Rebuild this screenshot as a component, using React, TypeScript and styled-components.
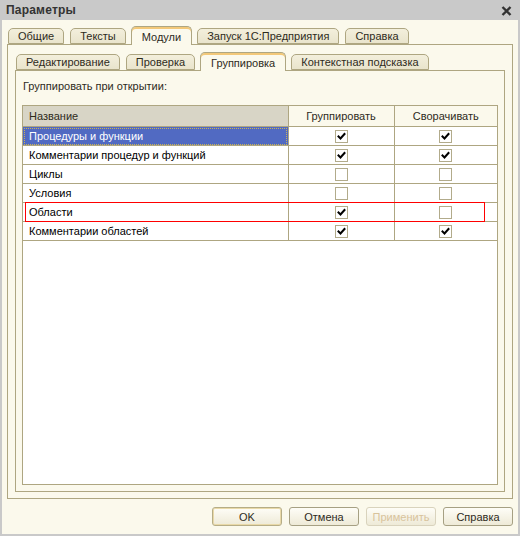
import React from 'react';
import styled, { createGlobalStyle } from 'styled-components';

const GlobalStyle = createGlobalStyle`
  html, body {
    margin: 0;
    padding: 0;
    background: #c9c9c9;
  }
  body {
    font-family: "Liberation Sans", Arial, sans-serif;
    font-size: 11px;
    color: #2b2a1f;
  }
`;

const ink = '#2e2b1c';
const line = '#aea681';

const outerTabs = [
  { title: 'Общие' },
  { title: 'Тексты' },
  { title: 'Модули', active: true },
  { title: 'Запуск 1С:Предприятия' },
  { title: 'Справка' },
];

const innerTabs = [
  { title: 'Редактирование' },
  { title: 'Проверка' },
  { title: 'Группировка', active: true },
  { title: 'Контекстная подсказка' },
];

const rows = [
  { name: 'Процедуры и функции', group: true, collapse: true, selected: true },
  { name: 'Комментарии процедур и функций', group: true, collapse: true },
  { name: 'Циклы', group: false, collapse: false },
  { name: 'Условия', group: false, collapse: false },
  { name: 'Области', group: true, collapse: false },
  { name: 'Комментарии областей', group: true, collapse: true },
];

const CheckBox = ({ checked }: { checked: boolean }) => (
  <Box>
    {checked && (
      <svg width="11" height="11" viewBox="0 0 11 11">
        <path d="M2.5 5.5 L4.5 7.5 L8.5 3" stroke="#000" strokeWidth="2" fill="none" strokeLinecap="square" />
      </svg>
    )}
  </Box>
);

const App = () => {
  return (
    <>
      <GlobalStyle />
      <Frame>
        <TitleBar>
          <Title>Параметры</Title>
          <CloseButton>
            <svg width="11" height="10" viewBox="0 0 11 10">
              <path d="M1.5 1 L9.5 9 M9.5 1 L1.5 9" stroke="#333" strokeWidth="2.4" />
            </svg>
          </CloseButton>
        </TitleBar>
        <Window>
          <Body>
            <TabStrip>
              {outerTabs.map((t) => (
                <Tab key={t.title} $active={!!t.active}>
                  {t.title}
                </Tab>
              ))}
            </TabStrip>
            <OuterPanel>
              <TabStrip>
                {innerTabs.map((t) => (
                  <Tab key={t.title} $active={!!t.active}>
                    {t.title}
                  </Tab>
                ))}
              </TabStrip>
              <InnerPanel>
                <Caption>Группировать при открытии:</Caption>
                <TableBox>
                  <Grid>
                    <colgroup>
                      <col style={{ width: 265 }} />
                      <col style={{ width: 106 }} />
                      <col />
                    </colgroup>
                    <thead>
                      <tr>
                        <HeadCell $current>Название</HeadCell>
                        <HeadCell>Группировать</HeadCell>
                        <HeadCell>Сворачивать</HeadCell>
                      </tr>
                    </thead>
                    <tbody>
                      {rows.map((r) => (
                        <tr key={r.name}>
                          <NameCell $selected={!!r.selected}>{r.name}</NameCell>
                          <CheckCell>
                            <CheckBox checked={r.group} />
                          </CheckCell>
                          <CheckCell>
                            <CheckBox checked={r.collapse} />
                          </CheckCell>
                        </tr>
                      ))}
                    </tbody>
                  </Grid>
                  <Highlight />
                </TableBox>
              </InnerPanel>
            </OuterPanel>
          </Body>
          <Footer>
            <Button $default>OK</Button>
            <Button>Отмена</Button>
            <Button disabled>Применить</Button>
            <Button>Справка</Button>
          </Footer>
        </Window>
      </Frame>
    </>
  );
};

const Frame = styled.div`
  width: 520px;
  height: 536px;
  box-sizing: border-box;
  padding: 0 2px 2px 2px;
  background: #c9c9c9;
  display: flex;
  flex-direction: column;
`;

const TitleBar = styled.div`
  height: 20px;
  flex-shrink: 0;
  display: flex;
  align-items: center;
  justify-content: space-between;
  padding: 0 4px;
`;

const Title = styled.div`
  font-weight: bold;
  font-size: 12px;
  color: #333;
  letter-spacing: 0.2px;
`;

const CloseButton = styled.div`
  display: flex;
  margin-right: 2px;
  margin-top: 1px;
`;

const Window = styled.div`
  flex: 1;
  background: #fbf9ec;
  display: flex;
  flex-direction: column;
`;

const Body = styled.div`
  padding: 6px 5px 0 5px;
  display: flex;
  flex-direction: column;
`;

const TabStrip = styled.div`
  display: flex;
  align-items: flex-end;
  gap: 6px;
  padding-left: 1px;
  height: 18px;
  position: relative;
  z-index: 1;
`;

const Tab = styled.div<{ $active: boolean }>`
  box-sizing: border-box;
  height: ${(p) => (p.$active ? '19px' : '16px')};
  margin: ${(p) => (p.$active ? '0 -1px -1px -1px' : '0')};
  padding: 0 ${(p) => (p.$active ? '10px' : '9px')};
  border: 1px solid ${line};
  border-bottom: ${(p) => (p.$active ? 'none' : `1px solid ${line}`)};
  border-radius: 5px 5px 0 0;
  background: ${(p) => (p.$active ? '#fbf9ec' : 'linear-gradient(#f3efdc, #e9e4cc)')};
  box-shadow: ${(p) => (p.$active ? 'inset 0 2px 0 #f3c878' : 'none')};
  display: flex;
  align-items: center;
  justify-content: center;
  font-size: 11px;
  color: ${ink};
  white-space: nowrap;
  padding-top: ${(p) => (p.$active ? '1px' : '0')};
`;

const OuterPanel = styled.div`
  height: 455px;
  box-sizing: border-box;
  border: 1px solid ${line};
  padding: 7px 7px 6px 7px;
  display: flex;
  flex-direction: column;
`;

const InnerPanel = styled.div`
  flex: 1;
  box-sizing: border-box;
  border: 1px solid ${line};
  padding: 9px 6px 6px 6px;
  display: flex;
  flex-direction: column;
`;

const Caption = styled.div`
  font-size: 11px;
  color: ${ink};
  height: 14px;
  margin-bottom: 11px;
  padding-left: 1px;
`;

const TableBox = styled.div`
  flex: 1;
  background: #fff;
  border: 1px solid ${line};
  position: relative;
`;

const Grid = styled.table`
  width: 100%;
  border-collapse: collapse;
  table-layout: fixed;
  font-size: 11px;
  tr:first-child th { border-top: none; }
  tr > *:first-child { border-left: none; }
  tr > *:last-child { border-right: none; }
`;

const HeadCell = styled.th<{ $current?: boolean }>`
  height: 20px;
  padding: 0 6px;
  font-weight: normal;
  font-size: 11px;
  color: ${ink};
  text-align: ${(p) => (p.$current ? 'left' : 'center')};
  background: ${(p) => (p.$current ? '#d8d5c6' : '#fbf9ec')};
  border: 1px solid ${line};
`;

const NameCell = styled.td<{ $selected: boolean }>`
  height: 18px;
  padding: 0 6px;
  font-size: 11px;
  white-space: nowrap;
  color: ${(p) => (p.$selected ? '#fff' : '#000')};
  background: ${(p) => (p.$selected ? '#516ac2' : '#fff')};
  border: 1px solid ${line};
  outline: ${(p) => (p.$selected ? '1px dotted #c9b25a' : 'none')};
  outline-offset: -2px;
`;

const CheckCell = styled.td`
  height: 18px;
  padding: 0;
  border: 1px solid ${line};
  text-align: center;
  vertical-align: middle;
`;

const Box = styled.div`
  display: inline-flex;
  align-items: center;
  justify-content: center;
  width: 13px;
  height: 13px;
  box-sizing: border-box;
  border: 1px solid #b2ab8b;
  background: #fff;
  vertical-align: middle;
`;

const Highlight = styled.div`
  position: absolute;
  left: 2px;
  top: 96px;
  width: 460px;
  height: 20px;
  box-sizing: border-box;
  border: 1px solid #ff0000;
  pointer-events: none;
`;

const Footer = styled.div`
  display: flex;
  justify-content: flex-end;
  gap: 7px;
  padding: 8px 5px 0 0;
`;

const Button = styled.button<{ $default?: boolean }>`
  width: 70px;
  height: 19px;
  box-sizing: border-box;
  padding: 0;
  border-radius: 3px;
  border: 1px solid ${(p) => (p.$default ? '#b6ad86' : '#a6a083')};
  box-shadow: ${(p) => (p.$default ? 'inset 0 0 0 1px #e9d9a8' : 'none')};
  background: linear-gradient(#fefdf7, #eeead7);
  font-family: "Liberation Sans", Arial, sans-serif;
  font-size: 11px;
  color: ${ink};
  &:disabled {
    color: #d8c39c;
    border-color: #d9d3bd;
  }
`;

export default App;
